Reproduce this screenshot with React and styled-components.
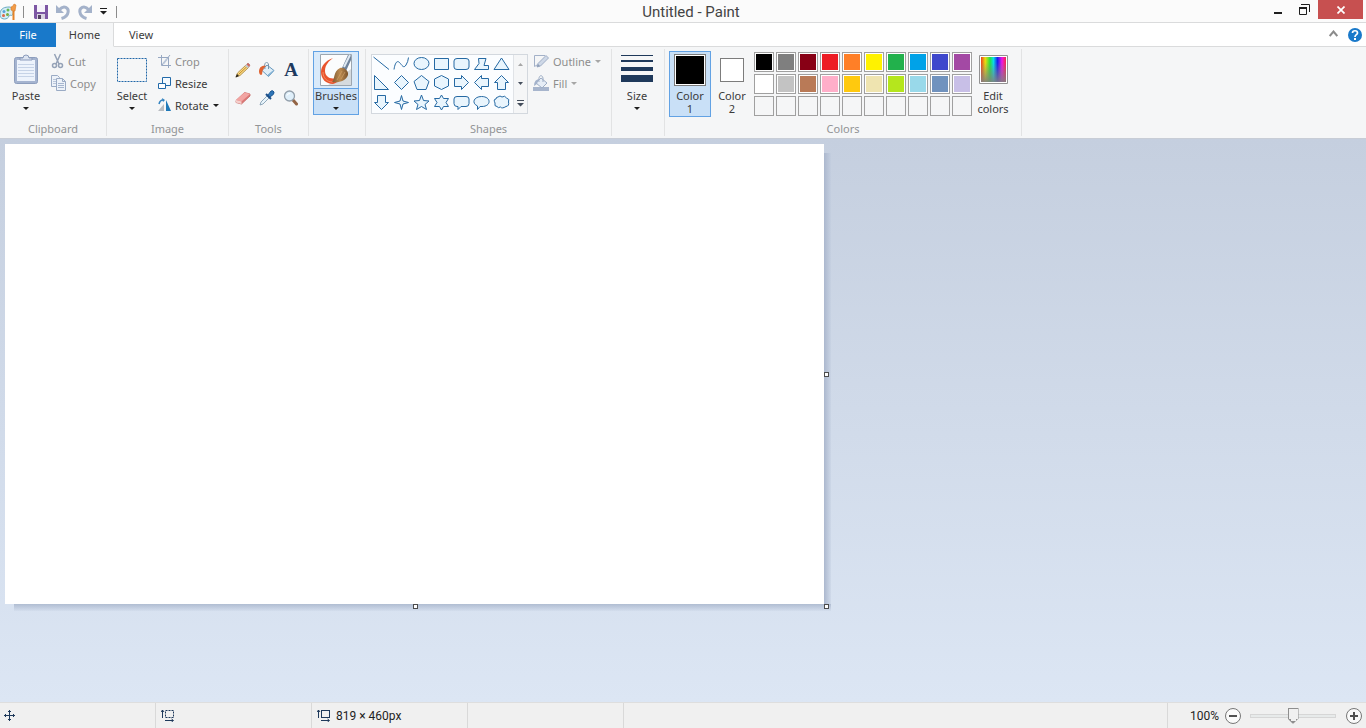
import React from "react";
import styled, { createGlobalStyle, css } from "styled-components";

const GlobalStyle = createGlobalStyle`
  * {
    box-sizing: border-box;
  }
  body {
    margin: 0;
    font-family: "Noto Sans", "Open Sans", sans-serif;
    font-size: 11px;
    color: #3b3b3b;
  }
  button {
    padding: 0;
    border: none;
    background: none;
    font: inherit;
    color: inherit;
  }
  svg {
    display: block;
    flex: none;
  }
`;

const Window = styled.div`
  display: flex;
  flex-direction: column;
  height: 100vh;
  overflow: hidden;
`;

const TitleBar = styled.header`
  display: flex;
  height: 23px;
  flex: none;
  background: #fbfbfb;
  border-bottom: 1px solid #dadbdc;
`;

const QuickAccess = styled.div`
  display: flex;
  align-items: center;
  height: 23px;
  width: 118px;
`;

const QuickButton = styled.button`
  display: flex;
  justify-content: center;
  flex: none;
  width: ${(props) => (props.$narrow ? "14px" : "22px")};
`;

const QuickDivider = styled.span`
  flex: none;
  width: 1px;
  height: 12px;
  margin: 0 6px;
  background: #8c8c8c;
`;

const Title = styled.h1`
  flex: 1;
  margin: 0;
  font-family: Roboto, "Noto Sans", sans-serif;
  font-size: 15px;
  font-weight: 400;
  line-height: 24px;
  text-align: center;
  color: #444;
`;

const WindowButtons = styled.div`
  display: flex;
  padding-right: 3px;
`;

const WindowButton = styled.button`
  display: flex;
  align-items: center;
  justify-content: center;
  width: ${(props) => (props.$close ? "45px" : "27px")};
  height: 19px;
  background: ${(props) => (props.$close ? "#c75050" : "transparent")};
`;

const TabBar = styled.nav`
  display: flex;
  height: 24px;
  flex: none;
  background: #fff;
`;

const Tab = styled.button`
  width: 54px;
  padding-top: 1px;
  line-height: 22px;
  border-bottom: 1px solid #dadbdc;
  ${(props) =>
    props.$file &&
    css`
      width: 56px;
      color: #fff;
      background: #1979ca;
      border-bottom-color: #1979ca;
    `}
  ${(props) =>
    props.$active &&
    css`
      width: 58px;
      background: #f5f6f7;
      border-right: 1px solid #dadbdc;
      border-bottom-color: #f5f6f7;
    `}
`;

const TabTools = styled.div`
  display: flex;
  flex: 1;
  align-items: center;
  justify-content: flex-end;
  gap: 10px;
  padding-right: 4px;
  border-bottom: 1px solid #dadbdc;
`;

const Ribbon = styled.div`
  display: flex;
  height: 92px;
  flex: none;
  background: #f5f6f7;
  border-bottom: 1px solid #c8cdd6;
`;

const Group = styled.section`
  display: flex;
  flex-direction: column;
  width: ${(props) => props.$width}px;
  flex: none;
  margin: 2px 0;
  padding-top: 2px;
  border-right: 1px solid #e2e3e4;
`;

const GroupBody = styled.div`
  display: flex;
  flex: 1;
  padding-left: ${(props) => (props.$tight ? "2px" : "4px")};
`;

const GroupLabel = styled.h2`
  height: 16px;
  margin: 0;
  font-size: 11px;
  font-weight: 400;
  line-height: 18px;
  text-align: center;
  color: #929496;
`;

const LargeButton = styled.button`
  display: flex;
  flex-direction: column;
  align-items: center;
  justify-content: flex-start;
  width: ${(props) => props.$width || 44}px;
  height: 66px;
  line-height: 13px;
  border: 1px solid transparent;
  ${(props) =>
    props.$active &&
    css`
      background: #c9e0f7;
      border-color: #62a2e4;
    `}
`;

const LargeIcon = styled.span`
  display: flex;
  align-items: center;
  justify-content: center;
  height: 36px;
  margin-bottom: 1px;
`;

const BrushButton = styled(LargeButton)`
  height: 64px;
  background: linear-gradient(#d9eafa 36px, #62a2e4 36px 37px, #c9e0f7 37px);
`;

const Column = styled.div`
  display: flex;
  flex-direction: column;
`;

const SmallButton = styled.button`
  display: flex;
  align-items: center;
  gap: 4px;
  height: 22px;
  padding: 0 0 2px 3px;
  color: ${(props) => (props.disabled ? "#8d8d8d" : "#3b3b3b")};
`;

const ArrowDown = styled.span`
  border: 3px solid transparent;
  border-top-color: ${(props) => props.$color || "#1e1e1e"};
  border-bottom: none;
  margin-top: ${(props) => (props.$below ? "5px" : "0")};
`;

const ToolGrid = styled.div`
  display: grid;
  grid-template-columns: repeat(3, 24px);
  grid-template-rows: 28px 28px;
  padding-top: 5px;
`;

const IconButton = styled.button`
  display: flex;
  align-items: center;
  justify-content: center;
`;

const Gallery = styled.div`
  display: flex;
  height: 60px;
  margin: 3px 2px 0 1px;
  background: #fbfdff;
  border: 1px solid #d3d8de;
`;

const ShapeGrid = styled.div`
  display: grid;
  grid-template-columns: repeat(7, 20px);
  grid-template-rows: 18px 20px 20px;
`;

const GalleryScroll = styled.div`
  display: grid;
  grid-template-rows: repeat(3, 1fr);
  width: 14px;
  margin-left: 1px;
  background: #f5f6f7;
  border-left: 1px solid #e0e3e7;
`;

const Swatch = styled.button`
  border: 1px solid #a0a0a0;
  background: ${(props) => props.$color || "transparent"};
  box-shadow: ${(props) => (props.$color ? "inset 0 0 0 1px #fff" : "none")};
`;

const PreviewSwatch = styled.span`
  width: ${(props) => props.$size}px;
  height: ${(props) => props.$size}px;
  border: 1px solid #7c7c7c;
  background: ${(props) => props.$color};
  box-shadow: inset 0 0 0 1px #fff;
`;

const Palette = styled.div`
  display: grid;
  grid-template-columns: repeat(10, 20px);
  grid-auto-rows: 20px;
  align-content: start;
  gap: 2px;
  padding: 1px 0 0 1px;
`;

const Workspace = styled.main`
  flex: 1;
  min-height: 0;
  padding: 5px;
  background: linear-gradient(#c5cfdf, #dce6f4);
`;

const Sheet = styled.div`
  position: relative;
  width: 819px;
  height: 460px;
  background: #fff;
`;

const ShadowRight = styled.div`
  position: absolute;
  top: 9px;
  bottom: 0;
  left: 100%;
  width: 7px;
  background: linear-gradient(to right, #acb8ce, rgba(190, 202, 221, 0.3));
`;

const ShadowBottom = styled.div`
  position: absolute;
  top: 100%;
  left: 9px;
  right: -7px;
  height: 7px;
  background: linear-gradient(#b0bdd2, rgba(200, 211, 229, 0.3));
`;

const handlePlaces = {
  right: "left: 100%; top: 50%; margin-top: -2px;",
  bottom: "left: 50%; top: 100%; margin-left: -2px;",
  corner: "left: 100%; top: 100%;",
};

const Handle = styled.span`
  position: absolute;
  width: 5px;
  height: 5px;
  background: #fff;
  border: 1px solid #4c4c4c;
  ${(props) => handlePlaces[props.$place]}
`;

const StatusBar = styled.footer`
  display: flex;
  height: 26px;
  flex: none;
  background: #f0f0f0;
  border-top: 1px solid #dedede;
  font-family: Roboto, "Noto Sans", sans-serif;
  font-size: 12px;
  color: #1e1e1e;
`;

const StatusCell = styled.div`
  display: flex;
  align-items: center;
  gap: 5px;
  width: 156px;
  padding-left: ${(props) => props.$indent || 5}px;
  border-right: 1px solid #d9d9d9;
`;

const StatusSpacer = styled.div`
  flex: 1;
  border-right: 1px solid #d9d9d9;
`;

const ZoomControls = styled.div`
  display: flex;
  align-items: center;
  width: 198px;
  padding-right: 4px;
  justify-content: flex-end;
`;

const ZoomSlider = styled.input`
  width: 86px;
  height: 16px;
  margin: 0 10px 0 9px;
  appearance: none;
  background: transparent;
  &::-webkit-slider-runnable-track {
    height: 4px;
    background: #e7eaea;
    border: 1px solid #d6d6d6;
  }
  &::-webkit-slider-thumb {
    appearance: none;
    width: 11px;
    height: 16px;
    margin-top: -7px;
    background:
      linear-gradient(#f0f0f0, #f0f0f0) 1px 1px / 9px 10px no-repeat,
      linear-gradient(#f0f0f0, #f0f0f0) 3px 11px / 5px 2px no-repeat,
      #8e8e8e;
    clip-path: polygon(0 0, 11px 0, 11px 11px, 6px 16px, 5px 16px, 0 11px);
  }
`;

const ZoomLabel = styled.label`
  margin-right: 6px;
`;

const colors = [
  "#000000", "#7f7f7f", "#880015", "#ed1c24", "#ff7f27",
  "#fff200", "#22b14c", "#00a2e8", "#3f48cc", "#a349a4",
  "#ffffff", "#c3c3c3", "#b97a57", "#ffaec9", "#ffc90e",
  "#efe4b0", "#b5e61d", "#99d9ea", "#7092be", "#c8bfe7",
  null, null, null, null, null, null, null, null, null, null,
];

const shapes = [
  ["Line", "M0.5 2 16 14.500"],
  ["Curve", "M1 14.500C2 8 4 5 6.500 7.500S10.500 14 13 10Q15 7 15.500 2.500"],
  ["Oval", "M1 8.500A7.500 6 0 0 1 16 8.500A7.500 6 0 0 1 1 8.500Z"],
  ["Rectangle", "M1.5 3.500H15.500V14.500H1.500Z"],
  ["Rounded rectangle", "M4 3.500H13Q16 3.500 16 6V12Q16 14.500 13 14.500H4Q1 14.500 1 12V6Q1 3.500 4 3.500Z"],
  ["Polygon", "M5.500 3.500H13L11 10.500H15.500V14.500H1.500L6 8.500Z"],
  ["Triangle", "M8.500 3 16 14.500H1Z"],
  ["Right triangle", "M1.500 1.500V15.500H15.500Z"],
  ["Diamond", "M8.500 1.500 15.500 8.500 8.500 15.500 1.500 8.500Z"],
  ["Pentagon", "M8.500 1.500 16 7.500 13 15.500H4L1 7.500Z"],
  ["Hexagon", "M8.500 1.500 15.500 5V12L8.500 15.500 1.500 12V5Z"],
  ["Right arrow", "M1.500 4.500H8.500V1.500L15.500 8.500 8.500 15.500V12.500H1.500Z"],
  ["Left arrow", "M15.500 4.500H8.500V1.500L1.500 8.500 8.500 15.500V12.500H15.500Z"],
  ["Up arrow", "M8.500 1.500 15.500 8.500H12.500V15.500H4.500V8.500H1.500Z"],
  ["Down arrow", "M8.500 15.500 15.500 8.500H12.500V1.500H4.500V8.500H1.500Z"],
  ["Four-point star", "M8.500 1.500 10 7 15.500 8.500 10 10 8.500 15.500 7 10 1.500 8.500 7 7Z"],
  ["Five-point star", "M8.500 1 10.500 6.500 16 7 12 10.500 13.500 15.500 8.500 12.500 3.500 15.500 5 10.500 1 7 6.500 6.500Z"],
  ["Six-point star", "M8.500 1 10.500 4.500H15.500L13 8.500 15.500 12.500H10.500L8.500 16 6.500 12.500H1.500L4 8.500 1.500 4.500H6.500Z"],
  ["Rounded callout", "M4 2.500H13Q16 2.500 16 5V9.500Q16 12.500 13 12.500H8L5 15.500V12.500H4Q1 12.500 1 9.500V5Q1 2.500 4 2.500Z"],
  ["Oval callout", "M8.500 2.500C18.500 2.500 18.500 12.500 9 12.500H7L4.500 15.500V12C-2 9 1 2.500 8.500 2.500Z"],
  ["Cloud callout", "M5 3Q7 1 9 3Q12 1 13.500 4Q17 5 15.500 8Q16.500 12 13 12.500Q9 15 7.500 13Q5 14.500 4 12.500Q1 12.500 2 9Q0 5 3 5Q3 3 5 3Z"],
];

const svgProps = (w, h = w) => ({
  width: w,
  height: h,
  viewBox: `0 0 ${w} ${h}`,
  fill: "none",
  "aria-hidden": true,
});

const PaintIcon = () => (
  <svg {...svgProps(17, 18)}>
    <path d="M0 10C1 5 5 4 9 4C13 4 14 7 13 11C12 14 10 11 9 13C8 17 1 17 0 13Z" fill="#d5edf6" stroke="#68a9c2" />
    <circle cx="4" cy="8.500" r="1.500" fill="#58a2d8" />
    <circle cx="8" cy="7" r="1.500" fill="#65b74e" />
    <circle cx="3.500" cy="12.500" r="1.500" fill="#dc6748" />
    <circle cx="7.500" cy="11.500" r="1.500" fill="#78ad45" />
    <path d="M13.500 8V17" stroke="#e48328" strokeWidth="2" />
    <path d="M11 4 13 3 14 1 16 2 15 8H13L11 7Z" fill="#f39b45" stroke="#d47829" strokeWidth=".6" />
  </svg>
);

const SaveIcon = () => (
  <svg {...svgProps(14)}>
    <path d="M0 0H14V14H1L0 13Z" fill="#7d57a4" />
    <path d="M3 0H11V7H3Z" fill="#f6f3fb" />
    <path d="M3 9H11V14H3Z" fill="#d9d4e1" />
    <path d="M4 10H7V14H4Z" fill="#554365" />
  </svg>
);

const UndoIcon = ({ flip }) => (
  <svg {...svgProps(14, 16)}>
    <g transform={flip ? "translate(14 0) scale(-1 1)" : undefined}>
      <path d="M3 6C8 0 13 4 12 8.500C11.500 12 9 13.500 5.500 14.500" stroke="#a4b2ca" strokeWidth="3" />
      <path d="M0 1V9H8Z" fill="#a4b2ca" />
    </g>
  </svg>
);

const MenuIcon = ({ color = "#1e1e1e" }) => (
  <svg {...svgProps(7, 7)}>
    <path d="M0 0H7V1H0ZM0 3H7L3.500 6.500Z" fill={color} />
  </svg>
);

const MinimizeIcon = () => (
  <svg {...svgProps(8, 12)}>
    <path d="M0 8H8V10H0Z" fill="#1e1e1e" />
  </svg>
);

const RestoreIcon = () => (
  <svg {...svgProps(11)}>
    <path d="M.5 3.500H7.500V10.500H.5ZM2 .5H10.500V8" stroke="#1e1e1e" />
    <path d="M0 3H8V5H0Z" fill="#1e1e1e" />
  </svg>
);

const CloseIcon = () => (
  <svg {...svgProps(8)}>
    <path d="M.5 .5 7.500 7.500M7.500 .5 .5 7.500" stroke="#fff" strokeWidth="1.700" />
  </svg>
);

const ChevronIcon = () => (
  <svg {...svgProps(9, 9)}>
    <path d="M.7 6 4.500 1.500 8.300 6" stroke="#8b8b8b" strokeWidth="2" />
  </svg>
);

const HelpIcon = () => (
  <svg {...svgProps(14)}>
    <circle cx="7" cy="7" r="7" fill="#1979ca" />
    <path d="M4.500 5C4.500 2 9.500 2 9.500 5C9.500 6.700 7 6.700 7 9" stroke="#fff" strokeWidth="1.700" />
    <path d="M6 10H8V12H6Z" fill="#fff" />
  </svg>
);

const PasteIcon = () => (
  <svg {...svgProps(26, 32)}>
    <rect x="1.500" y="3.500" width="23" height="26" rx="2" fill="#a5b4d0" stroke="#8d9ebd" />
    <path d="M4 6H22V27H4Z" fill="#edf3fc" />
    <path d="M5 10.500H21M5 13.500H21M5 16.500H21M5 19.500H21M5 22.500H21" stroke="#c6d3e7" />
    <path d="M7 6V4H10Q10 1 13 1T16 4H19V6Z" fill="#dce4f1" stroke="#8c9cbb" />
  </svg>
);

const CutIcon = () => (
  <svg {...svgProps(13, 16)}>
    <path d="M3.500 1 8 11M9.500 1 5 11" stroke="#95a2b7" strokeWidth="1.500" />
    <circle cx="3.500" cy="12.500" r="2" stroke="#95a2b7" strokeWidth="1.500" />
    <circle cx="9.500" cy="12.500" r="2" stroke="#95a2b7" strokeWidth="1.500" />
  </svg>
);

const CopyIcon = () => (
  <svg {...svgProps(15, 16)}>
    <path d="M.5 .5H6.500L8.500 2.500V11.500H.5Z" fill="#edf2f9" stroke="#9aabc5" />
    <path d="M2 4.500H7M2 6.500H7M2 8.500H7" stroke="#b9c6da" />
    <path d="M5.500 3.500H11.500L14.500 6.500V15.500H5.500Z" fill="#edf2f9" stroke="#9aabc5" />
    <path d="M11.500 3.500V6.500H14.500" stroke="#9aabc5" />
    <path d="M7 8.500H13M7 10.500H13M7 12.500H13" stroke="#a6b6cf" />
  </svg>
);

const SelectIcon = () => (
  <svg {...svgProps(30, 26)}>
    <rect x=".5" y="1.500" width="29" height="23" stroke="#1f67a8" strokeDasharray="2 1" />
  </svg>
);

const CropIcon = () => (
  <svg {...svgProps(13, 14)}>
    <path d="M3.500 1V11.500H13M0 3.500H10.500V14M4 11 12 1" stroke="#97a8c2" />
    <path d="M5 10 9 5" stroke="#b9c6d9" strokeWidth="2" />
  </svg>
);

const ResizeIcon = () => (
  <svg {...svgProps(13, 14)}>
    <path d="M4.500 1.500H12.500V9.500H4.500Z" fill="#f4faff" stroke="#226aa9" />
    <path d="M.5 7.500H7.500V12.500H.5Z" fill="#fff" stroke="#226aa9" />
  </svg>
);

const RotateIcon = () => (
  <svg {...svgProps(13, 14)}>
    <path d="M6 6V13H0Z" fill="#b8bcc1" />
    <path d="M8 2V13H13Z" fill="#1e78b8" />
    <path d="M1 6Q2 2 5 2" stroke="#3182c0" strokeWidth="1.500" />
    <path d="M4 0 7 2 5 4Z" fill="#3182c0" />
  </svg>
);

const PencilIcon = () => (
  <svg {...svgProps(16)}>
    <path d="M1 15 2.500 11 11 3 13.500 5.500 5 13.500Z" fill="#f7dc86" stroke="#a87d32" strokeWidth=".8" />
    <path d="M3.500 12.500 12 4.500" stroke="#c98a2c" />
    <path d="M11.500 2.500 13 1 15 3 14 5Z" fill="#d6665f" stroke="#996054" strokeWidth=".5" />
    <path d="M10 4 11.500 2.500 14 5 12.500 6Z" fill="#c3c8ce" />
    <path d="M.5 15.500 2 12 4 14Z" fill="#222" />
  </svg>
);

const BucketIcon = () => (
  <svg {...svgProps(16)}>
    <path d="M8 3 15 8.500 9.500 14.500 3 8.500Z" fill="#dfeef8" stroke="#6798bd" />
    <path d="M9 13 14.500 8.500 9.500 14Z" fill="#84b3d6" stroke="#84b3d6" />
    <path d="M6 7C4.500 0 8-1 9.500 2V7" stroke="#7a96aa" />
    <path d="M7 4C3 3 0 5 0 10Q.5 14 3 12.500L3.500 9Q4 6 7 4Z" fill="#e06332" />
  </svg>
);

const LetterIcon = styled.span`
  font: 700 19px/20px "Liberation Serif", serif;
  color: #1e3a5f;
`;

const EraserIcon = () => (
  <svg {...svgProps(16)}>
    <path d="M1 10.500 9.500 2.500 15 4V6L6.500 14 1 12.500Z" fill="#dc7776" stroke="#c56a66" strokeWidth=".8" />
    <path d="M1 10 9.500 2.500 15 4 6.500 11.500Z" fill="#f2a4a2" />
    <path d="M1 10 6.500 11.500V14L1 12.500Z" fill="#f5d0cd" />
  </svg>
);

const PickerIcon = () => (
  <svg {...svgProps(16)}>
    <path d="M1 15 2 12 8 6 10 8 4 14Z" fill="#e8f4fb" stroke="#7995ab" strokeWidth=".8" />
    <path d="M7 4 12 9" stroke="#1b4d88" strokeWidth="2" />
    <path d="M9 5 12 1Q14 0 15 2Q16 4 11 7Z" fill="#2d75b8" stroke="#1d5791" />
  </svg>
);

const MagnifierIcon = () => (
  <svg {...svgProps(16)}>
    <path d="M10 10 13.500 14" stroke="#936445" strokeWidth="3" strokeLinecap="round" />
    <circle cx="6.500" cy="6" r="5" fill="#dfeffa" stroke="#929fab" strokeWidth="1.300" />
    <path d="M4 5.500Q4.500 3.500 7 3.500" stroke="#fff" />
  </svg>
);

const BrushIcon = () => (
  <svg {...svgProps(32)}>
    <defs>
      <linearGradient id="bristle">
        <stop offset="0" stopColor="#7d5933" />
        <stop offset=".5" stopColor="#bb8a50" />
        <stop offset="1" stopColor="#7b532c" />
      </linearGradient>
    </defs>
    <path d="M.5 .5H31.500V31.500H.5Z" fill="#fbfcfd" stroke="#9ca6b0" />
    <path d="M17 26 31 15V31H8Z" fill="#d5dade" />
    <path d="M13 4C5 7 1 12 1 18C1 25 6 30 13 30C17 29 19 27 16 24C10 26 5 22 5 17C5 11 9 7 13 4Z" fill="#e9542d" />
    <path d="M3 18C3 24 7 28 13 28" stroke="#f58a62" />
    <path d="M22 14 28 1H31V6L26 17Z" fill="#6e829b" />
    <path d="M24 13 30 1" stroke="#dfe9f3" strokeWidth="2" />
    <path d="M20 14C24 13 29 17 28 21C26 27 19 29 12 28C15 26 13 17 20 14Z" fill="url(#bristle)" />
    <path d="M17 26 22 17M21 25 25 18" stroke="#d0a168" strokeWidth=".7" />
  </svg>
);

const OutlineIcon = () => (
  <svg {...svgProps(16)}>
    <path d="M12 2.500H1.500V13.500L4 12" stroke="#a3b1c8" />
    <path d="M4 14 5 10.500 13 2.500 15.500 5 7.500 13Z" fill="#ced8e7" stroke="#9eadc5" />
    <path d="M4 14 5 11 7 13Z" fill="#8e9db7" />
  </svg>
);

const FillIcon = () => (
  <svg {...svgProps(16)}>
    <path d="M0 12H16V16H0Z" fill="#a7b5cd" />
    <path d="M8 3 14 8 9 13 3 8Z" fill="#e6edf6" stroke="#9dadc5" />
    <path d="M6 7C5 0 9-1 10 3V7" stroke="#9dadc5" />
    <path d="M7 4Q1 4 1 11L4 9Q4 6 7 4Z" fill="#a3b2cb" />
  </svg>
);

const SizeIcon = () => (
  <svg {...svgProps(32, 30)}>
    <path d="M0 0H32V1H0ZM0 5H32V7H0ZM0 12H32V16H0ZM0 20H32V27H0Z" fill="#1e395b" />
  </svg>
);

const SpectrumIcon = () => (
  <svg {...svgProps(29, 31)}>
    <defs>
      <linearGradient id="hue">
        <stop offset="0" stopColor="#e8401e" />
        <stop offset=".17" stopColor="#ecdc10" />
        <stop offset=".36" stopColor="#24e43d" />
        <stop offset=".5" stopColor="#08dde8" />
        <stop offset=".66" stopColor="#1720ee" />
        <stop offset=".84" stopColor="#ef16e6" />
        <stop offset="1" stopColor="#f32746" />
      </linearGradient>
      <linearGradient id="fade" x2="0" y2="1">
        <stop offset=".2" stopColor="#808080" stopOpacity="0" />
        <stop offset="1" stopColor="#808080" stopOpacity=".9" />
      </linearGradient>
    </defs>
    <path d="M.5 .5H28.500V28.500H.5Z" fill="#fff" stroke="#929292" />
    <path d="M2 2H27V27H2Z" fill="url(#hue)" />
    <path d="M2 2H27V27H2Z" fill="url(#fade)" />
  </svg>
);

const MoveIcon = () => (
  <svg {...svgProps(11)}>
    <path d="M5.500 0V11M0 5.500H11" stroke="#1e395b" />
    <path d="M4 2 5.500 .5 7 2M4 9 5.500 10.500 7 9M2 4 .5 5.500 2 7M9 4 10.500 5.500 9 7" stroke="#1e395b" />
  </svg>
);

const DimensionIcon = ({ dashed }) => (
  <svg {...svgProps(14, 13)}>
    <rect x="4.500" y="1.500" width="8" height="7" stroke="#1e395b" strokeDasharray={dashed ? "2 1" : undefined} />
    <path d="M1.500 1V9M0 3 1.500 1 3 3M4 11.500H12M10.500 10 12.500 11.500 10.500 13" stroke="#1e395b" />
  </svg>
);

const ZoomIcon = ({ plus }) => (
  <svg {...svgProps(16)}>
    <circle cx="8" cy="8" r="7.500" fill="#fafafa" stroke="#777" />
    <path d={plus ? "M4 7H12V9H4ZM7 4H9V12H7Z" : "M4 7H12V9H4Z"} fill="#505050" />
  </svg>
);

const GalleryArrow = ({ up }) => (
  <svg {...svgProps(5, 3)}>
    <path d={up ? "M0 3H5L2.500 0Z" : "M0 0H5L2.500 3Z"} fill={up ? "#a6a6a6" : "#454e5c"} />
  </svg>
);

function RibbonGroup({ label, width, tight, children }) {
  return (
    <Group $width={width} aria-label={label}>
      <GroupBody $tight={tight}>{children}</GroupBody>
      {label && <GroupLabel>{label}</GroupLabel>}
    </Group>
  );
}

function App() {
  return (
    <Window>
      <GlobalStyle />
      <TitleBar>
        <QuickAccess>
          <PaintIcon />
          <QuickDivider />
          <QuickButton aria-label="Save">
            <SaveIcon />
          </QuickButton>
          <QuickButton aria-label="Undo">
            <UndoIcon />
          </QuickButton>
          <QuickButton aria-label="Redo">
            <UndoIcon flip />
          </QuickButton>
          <QuickButton $narrow aria-label="Customize Quick Access Toolbar">
            <MenuIcon />
          </QuickButton>
          <QuickDivider />
        </QuickAccess>
        <Title>Untitled - Paint</Title>
        <WindowButtons>
          <WindowButton aria-label="Minimize">
            <MinimizeIcon />
          </WindowButton>
          <WindowButton aria-label="Restore">
            <RestoreIcon />
          </WindowButton>
          <WindowButton $close aria-label="Close">
            <CloseIcon />
          </WindowButton>
        </WindowButtons>
      </TitleBar>

      <TabBar>
        <Tab $file>File</Tab>
        <Tab $active>Home</Tab>
        <Tab>View</Tab>
        <TabTools>
          <IconButton aria-label="Minimize the ribbon">
            <ChevronIcon />
          </IconButton>
          <IconButton aria-label="Help">
            <HelpIcon />
          </IconButton>
        </TabTools>
      </TabBar>

      <Ribbon>
        <RibbonGroup label="Clipboard" width={107}>
          <LargeButton>
            <LargeIcon>
              <PasteIcon />
            </LargeIcon>
            Paste
            <ArrowDown $below />
          </LargeButton>
          <Column>
            <SmallButton disabled>
              <CutIcon />
              Cut
            </SmallButton>
            <SmallButton disabled>
              <CopyIcon />
              Copy
            </SmallButton>
          </Column>
        </RibbonGroup>

        <RibbonGroup label="Image" width={122} tight>
          <LargeButton $width={46}>
            <LargeIcon>
              <SelectIcon />
            </LargeIcon>
            Select
            <ArrowDown $below />
          </LargeButton>
          <Column>
            <SmallButton disabled>
              <CropIcon />
              Crop
            </SmallButton>
            <SmallButton>
              <ResizeIcon />
              Resize
            </SmallButton>
            <SmallButton>
              <RotateIcon />
              Rotate
              <ArrowDown />
            </SmallButton>
          </Column>
        </RibbonGroup>

        <RibbonGroup label="Tools" width={80} tight>
          <ToolGrid>
            <IconButton aria-label="Pencil">
              <PencilIcon />
            </IconButton>
            <IconButton aria-label="Fill with color">
              <BucketIcon />
            </IconButton>
            <IconButton aria-label="Text">
              <LetterIcon>A</LetterIcon>
            </IconButton>
            <IconButton aria-label="Eraser">
              <EraserIcon />
            </IconButton>
            <IconButton aria-label="Color picker">
              <PickerIcon />
            </IconButton>
            <IconButton aria-label="Magnifier">
              <MagnifierIcon />
            </IconButton>
          </ToolGrid>
        </RibbonGroup>

        <RibbonGroup width={57}>
          <BrushButton $active $width={46}>
            <LargeIcon>
              <BrushIcon />
            </LargeIcon>
            Brushes
            <ArrowDown $below />
          </BrushButton>
        </RibbonGroup>

        <RibbonGroup label="Shapes" width={246}>
          <Gallery>
            <ShapeGrid>
              {shapes.map(([name, path]) => (
                <IconButton key={name} aria-label={name}>
                  <svg {...svgProps(18)}>
                    <path
                      d={path}
                      stroke="#2569a3"
                      fill={name === "Line" || name === "Curve" ? "none" : "#e9f5fd"}
                    />
                  </svg>
                </IconButton>
              ))}
            </ShapeGrid>
            <GalleryScroll>
              <IconButton aria-label="Previous shapes">
                <GalleryArrow up />
              </IconButton>
              <IconButton aria-label="Next shapes">
                <GalleryArrow />
              </IconButton>
              <IconButton aria-label="More shapes">
                <MenuIcon color="#454e5c" />
              </IconButton>
            </GalleryScroll>
          </Gallery>
          <Column>
            <SmallButton disabled>
              <OutlineIcon />
              Outline
              <ArrowDown $color="#a6a6a6" />
            </SmallButton>
            <SmallButton disabled>
              <FillIcon />
              Fill
              <ArrowDown $color="#a6a6a6" />
            </SmallButton>
          </Column>
        </RibbonGroup>

        <RibbonGroup width={53} tight>
          <LargeButton $width={46}>
            <LargeIcon>
              <SizeIcon />
            </LargeIcon>
            Size
            <ArrowDown $below />
          </LargeButton>
        </RibbonGroup>

        <RibbonGroup label="Colors" width={357}>
          <LargeButton $active $width={42}>
            <LargeIcon>
              <PreviewSwatch $size={32} $color="#000" />
            </LargeIcon>
            Color
            <br />1
          </LargeButton>
          <LargeButton $width={42}>
            <LargeIcon>
              <PreviewSwatch $size={24} $color="#fff" />
            </LargeIcon>
            Color
            <br />2
          </LargeButton>
          <Palette>
            {colors.map((color, i) => (
              <Swatch key={i} $color={color} aria-label={color || "Empty color"} />
            ))}
          </Palette>
          <LargeButton $width={42}>
            <LargeIcon>
              <SpectrumIcon />
            </LargeIcon>
            Edit
            <br />
            colors
          </LargeButton>
        </RibbonGroup>
      </Ribbon>

      <Workspace>
        <Sheet>
          <ShadowRight />
          <ShadowBottom />
          <Handle $place="right" />
          <Handle $place="bottom" />
          <Handle $place="corner" />
        </Sheet>
      </Workspace>

      <StatusBar>
        <StatusCell $indent={4}>
          <MoveIcon />
        </StatusCell>
        <StatusCell>
          <DimensionIcon dashed />
        </StatusCell>
        <StatusCell>
          <DimensionIcon />
          819 × 460px
        </StatusCell>
        <StatusCell />
        <StatusSpacer />
        <ZoomControls>
          <ZoomLabel htmlFor="zoom">100%</ZoomLabel>
          <IconButton aria-label="Zoom out">
            <ZoomIcon />
          </IconButton>
          <ZoomSlider id="zoom" type="range" min="0" max="100" defaultValue="50" />
          <IconButton aria-label="Zoom in">
            <ZoomIcon plus />
          </IconButton>
        </ZoomControls>
      </StatusBar>
    </Window>
  );
}

export default App;
